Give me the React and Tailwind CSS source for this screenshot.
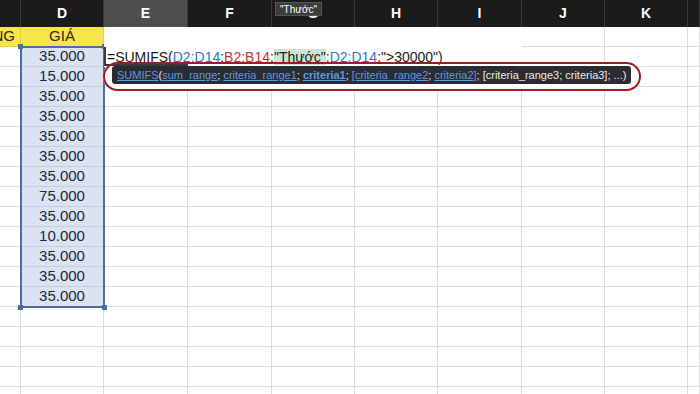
import React from 'react';

const cols = [
  { w: 'w-[21px]', label: '' },
  { w: 'w-[83px]', label: 'D' },
  { w: 'w-[84px]', label: 'E', active: true },
  { w: 'w-[84px]', label: 'F' },
  { w: 'w-[83px]', label: 'G' },
  { w: 'w-[83px]', label: 'H' },
  { w: 'w-[84px]', label: 'I' },
  { w: 'w-[83px]', label: 'J' },
  { w: 'w-[83px]', label: 'K' },
  { w: 'w-[12px]', label: '' },
];

const prices = ['35.000', '15.000', '35.000', '35.000', '35.000', '35.000', '35.000', '75.000', '35.000', '10.000', '35.000', '35.000', '35.000'];

const rows = Array.from({ length: 19 }, (_, i) => i);

function Cell({ col, ci, ri }) {
  // yellow title row
  if (ri === 0 && ci <= 1) {
    return (
      <div className={`${col.w} h-[20px] shrink-0 border-r border-b border-[#e3d23a] bg-[#f8e54a] flex items-center ${ci === 0 ? 'justify-end pr-[5px]' : 'justify-center'} text-[15px] text-[#2a2a22] whitespace-nowrap`}>
        {ci === 0 ? 'NG' : 'GIÁ'}
      </div>
    );
  }
  // selected price column
  if (ci === 1 && ri >= 1 && ri <= 13) {
    return (
      <div className={`${col.w} h-[20px] shrink-0 border-r border-b border-[#c4cfe0] bg-[#dae3f1] flex items-center justify-center text-[15px] text-[#1b2739]`}>
        {prices[ri - 1]}
      </div>
    );
  }
  return <div className={`${col.w} h-[20px] shrink-0 border-r border-b border-[#dcdcdc] bg-white`} />;
}

const Link = ({ children, bold }) => (
  <span className={`text-[#5c9be3] underline underline-offset-1 ${bold ? 'font-bold' : ''}`}>{children}</span>
);

export default function App() {
  return (
    <div className="relative w-[700px] h-[394px] overflow-hidden bg-white font-['Liberation_Sans',Arial,sans-serif]">
      {/* column headers */}
      <div className="flex h-[27px] bg-[#1b1b1b]">
        {cols.map((c, i) => (
          <div
            key={i}
            className={`${c.w} shrink-0 h-full border-r border-[#3a3a3a] flex items-center justify-center text-[14px] font-bold text-white ${c.active ? 'bg-[#4e4e4e]' : ''}`}
          >
            {c.label}
          </div>
        ))}
      </div>

      {/* grid body */}
      <div>
        {rows.map((ri) => (
          <div key={ri} className="flex">
            {cols.map((c, ci) => (
              <Cell key={ci} col={c} ci={ci} ri={ri} />
            ))}
          </div>
        ))}
      </div>

      {/* selection frame D2:D14 */}
      <div className="absolute left-[20px] top-[46px] w-[85px] h-[262px] border-2 border-[#4d6e9c]" />
      <div className="absolute left-[18px] top-[44px] w-[5px] h-[5px] bg-[#4d6e9c]" />
      <div className="absolute left-[102px] top-[44px] w-[5px] h-[5px] bg-[#4d6e9c]" />
      <div className="absolute left-[18px] top-[305px] w-[5px] h-[5px] bg-[#4d6e9c]" />
      <div className="absolute left-[102px] top-[305px] w-[5px] h-[5px] bg-[#4d6e9c]" />

      {/* in-cell editor */}
      <div className="absolute left-[104px] top-[27px] w-[418px] h-[40px] bg-white" />
      <div className="absolute left-[103px] top-[62px] w-[538px] h-[29px] rounded-full bg-white" />
      <div className="absolute left-[104px] top-[47px] w-[84px] h-[19px] border-l-2 border-b-2 border-[#3a3a3a]" />
      <div className="absolute left-[107px] top-[47px] h-[20px] leading-[20px] text-[14px] text-[#1a1a1a] whitespace-nowrap">
        =SUMIFS(<span className="text-[#3e70b8]">D2:D14</span>;<span className="text-[#c0343f]">B2:B14</span>;
        <span className="bg-[#cfe2d4]">"Thước"</span>;<span className="text-[#3e70b8]">D2:D14</span>;"&gt;30000")
      </div>

      {/* function hint */}
      <div className="absolute left-[103px] top-[62px] w-[538px] h-[29px] rounded-full border-2 border-[#a6191f]" />
      <div className="absolute left-[112px] top-[66px] w-[519px] h-[18px] rounded-[3px] bg-[#2a2c31] pl-[5px] leading-[18px] text-[11px] text-[#ececec] whitespace-nowrap">
        <Link>SUMIFS</Link>(<Link>sum_range</Link>; <Link>criteria_range1</Link>; <Link bold>criteria1</Link>;{' '}
        <Link>[criteria_range2</Link>; <Link>criteria2]</Link>; [criteria_range3; criteria3]; ...)
      </div>

      {/* header tooltip */}
      <div className="absolute left-[275px] top-[2px] w-[47px] h-[14px] bg-[#3c3c3c] border border-[#555] flex items-center justify-center text-[10px] text-white">
        "Thước"
      </div>
    </div>
  );
}
